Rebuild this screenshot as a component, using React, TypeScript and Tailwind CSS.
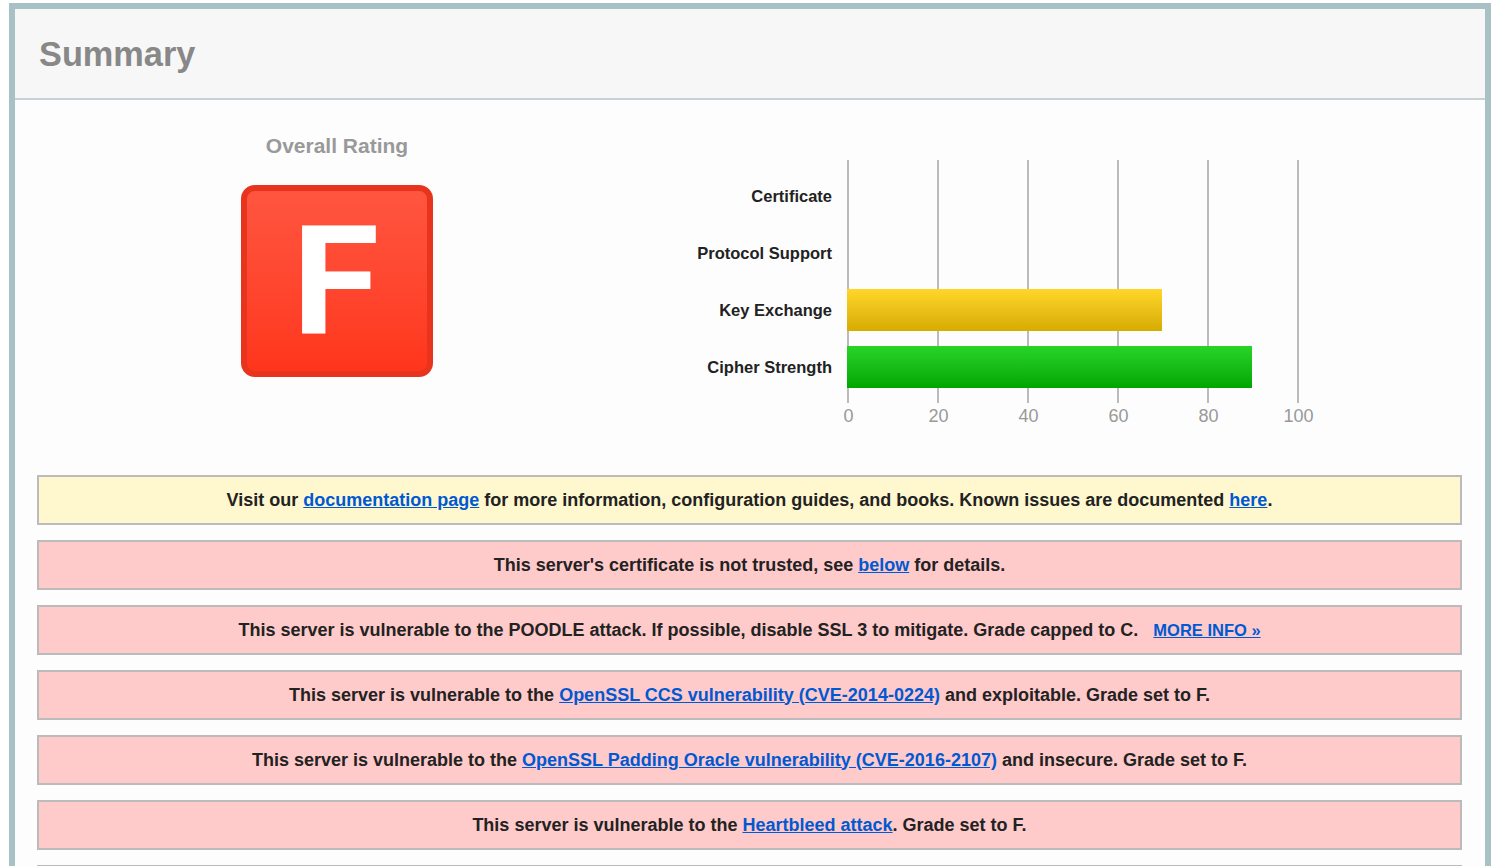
import type { ReactNode } from "react";

const scores = [
  { label: "Certificate", value: 0, fill: "" },
  { label: "Protocol Support", value: 0, fill: "" },
  { label: "Key Exchange", value: 70, fill: "bg-linear-to-b from-[#ffd628] to-[#d6ac00]" },
  { label: "Cipher Strength", value: 90, fill: "bg-linear-to-b from-[#28d428] to-[#00a600]" },
];

const ticks = [0, 20, 40, 60, 80, 100];

function Link({ children, small = false }: { children: ReactNode; small?: boolean }) {
  return (
    <a href="#" className={small ? "text-[16.5px] text-[#0059d2] underline" : "text-[#0059d2] underline"}>
      {children}
    </a>
  );
}

function Notice({ children, warning = false }: { children: ReactNode; warning?: boolean }) {
  return (
    <div
      className={
        "flex h-[50px] shrink-0 items-center justify-center border-2 border-[#bbb] text-[18px] font-bold whitespace-nowrap text-[#222] " +
        (warning ? "bg-[#fff8ce]" : "bg-[#ffcaca]")
      }
    >
      <p>{children}</p>
    </div>
  );
}

function Chart() {
  return (
    <div className="flex pt-[60px]">
      <div className="flex w-[173px] flex-col gap-[15px] pt-[15px] text-right text-[16.5px] font-bold text-[#222]">
        {scores.map((s) => (
          <div key={s.label} className="h-[42px] leading-[42px]">
            {s.label}
          </div>
        ))}
      </div>
      <div className="ml-[15px] w-[452px]">
        <div className="grid h-[243px]">
          <div className="col-start-1 row-start-1 flex justify-between">
            {ticks.map((t) => (
              <div key={t} className="w-[2px] bg-[#bbb]" />
            ))}
          </div>
          <div className="col-start-1 row-start-1 flex w-[450px] flex-col gap-[15px] pt-[15px]">
            {scores.map((s) => (
              <div key={s.label} className={"h-[42px] " + s.fill} style={{ width: `${s.value}%` }} />
            ))}
          </div>
        </div>
        <div className="flex justify-between text-[18px] leading-[26px] text-[#999]">
          {ticks.map((t) => (
            <div key={t} className="flex w-[2px] justify-center">
              <span className="pl-px">{t}</span>
            </div>
          ))}
        </div>
      </div>
    </div>
  );
}

export default function App() {
  return (
    <div className="h-[866px] w-[1493px] overflow-hidden bg-white pt-[3px] pl-[9px] font-['Liberation_Sans',Arial,sans-serif]">
      <main className="h-[900px] w-[1482px] border-6 border-[#a7c1c5] bg-[#fdfdfd]">
        <header className="flex h-[91px] items-center border-b-2 border-[#c5d1d3] bg-[#f7f7f7] pt-[2px] pl-[24px]">
          <h1 className="text-[34.3px] font-bold text-[#888]">Summary</h1>
        </header>
        <div className="flex h-[375px]">
          <section className="flex w-[644px] flex-col items-center pt-[30px]">
            <h2 className="text-[21px] leading-[32px] font-bold text-[#999]">Overall Rating</h2>
            <div className="mt-[23px] flex h-[192px] w-[192px] items-center justify-center rounded-[14px] border-6 border-[#e8341c] bg-linear-to-b from-[#ff5640] to-[#ff341a] bg-origin-border pt-[2px] pr-[2px]">
              <span className="inline-block scale-x-[1.045] font-[Roboto,sans-serif] text-[152px] leading-[178px] font-bold text-white">
                F
              </span>
            </div>
          </section>
          <Chart />
        </div>
        <section className="flex flex-col gap-[15px] pr-[23px] pl-[22px]">
          <Notice warning>
            Visit our <Link>documentation page</Link> for more information, configuration guides, and books. Known
            issues are documented <Link>here</Link>.
          </Notice>
          <Notice>
            This server's certificate is not trusted, see <Link>below</Link> for details.
          </Notice>
          <Notice>
            This server is vulnerable to the POODLE attack. If possible, disable SSL 3 to mitigate. Grade capped to
            C. &nbsp; <Link small>MORE INFO »</Link>
          </Notice>
          <Notice>
            This server is vulnerable to the <Link>OpenSSL CCS vulnerability (CVE-2014-0224)</Link> and exploitable.
            Grade set to F.
          </Notice>
          <Notice>
            This server is vulnerable to the <Link>OpenSSL Padding Oracle vulnerability (CVE-2016-2107)</Link> and
            insecure. Grade set to F.
          </Notice>
          <Notice>
            This server is vulnerable to the <Link>Heartbleed attack</Link>. Grade set to F.
          </Notice>
          <Notice>{null}</Notice>
        </section>
      </main>
    </div>
  );
}
